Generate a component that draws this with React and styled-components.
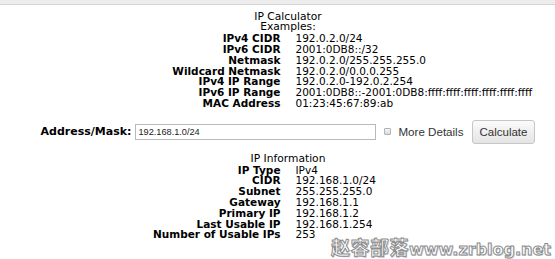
import React from "react";
import styled, { createGlobalStyle } from "styled-components";

const GlobalStyle = createGlobalStyle`
  html, body {
    margin: 0;
    padding: 0;
    background: #ffffff;
  }
  body {
    font-family: "DejaVu Sans", Verdana, sans-serif;
    color: #000;
    overflow: hidden;
  }
`;

const TopBar = styled.div`
  height: 4px;
  background: #ececec;
  border-bottom: 1px solid #d4d4d4;
`;

const Page = styled.div`
  position: relative;
  height: 254px;
  padding-left: 21px;
`;

const Section = styled.section`
  margin-top: ${(p) => p.$top}px;
`;

const Heading = styled.div`
  text-align: center;
  font-size: 10.7px;
  line-height: 10.8px;
`;

const InfoGrid = styled.div`
  display: grid;
  grid-template-columns: 1fr 1fr;
  column-gap: 15px;
  font-size: 10.5px;
  line-height: 10.8px;
`;

const Label = styled.div`
  text-align: right;
  font-weight: bold;
  white-space: nowrap;
`;

const Value = styled.div`
  white-space: nowrap;
`;

const Form = styled.form`
  display: flex;
  align-items: center;
  justify-content: center;
  margin-top: 11px;
  height: 24px;
`;

const FormLabel = styled.label`
  font-size: 11px;
  font-weight: bold;
  margin-right: 4px;
`;

const AddressInput = styled.input`
  box-sizing: border-box;
  width: 241px;
  height: 16px;
  margin: 0 8px 0 0;
  padding: 0 2px;
  border: 1px solid #b9b9b9;
  font-family: "Liberation Sans", Arial, sans-serif;
  font-size: 9.2px;
  color: #222;
  outline: none;
`;

const Check = styled.input`
  appearance: none;
  box-sizing: border-box;
  width: 7px;
  height: 7px;
  margin: 0 7px 0 0;
  border: 1px solid #b3b3b3;
  border-radius: 1px;
  background: linear-gradient(#f6f6f6, #dadada);
`;

const CheckText = styled.span`
  font-family: "Liberation Sans", Arial, sans-serif;
  font-size: 11.6px;
  color: #333;
  margin-right: 8px;
`;

const Button = styled.button`
  box-sizing: border-box;
  height: 24px;
  padding: 0 7px;
  border: 1px solid #c6c6c6;
  border-radius: 3px;
  background: linear-gradient(#fbfbfb, #e4e4e4);
  font-family: "Liberation Sans", Arial, sans-serif;
  font-size: 11.5px;
  color: #333;
`;

const Watermark = styled.div`
  position: absolute;
  right: 4px;
  bottom: 8px;
  display: flex;
  align-items: baseline;
  line-height: 1;
  color: #fff;
  -webkit-text-stroke: 1px #8c8c8c;
  text-shadow: 1px 1px 0 #cdd6e6;
  font-weight: bold;
  white-space: nowrap;
`;

const MarkCjk = styled.span`
  font-family: "Noto Sans CJK SC", sans-serif;
  font-size: 19px;
  letter-spacing: 0.5px;
`;

const MarkLatin = styled.span`
  font-family: "DejaVu Sans", sans-serif;
  font-size: 16px;
  letter-spacing: 0;
`;

const examples = [
  ["IPv4 CIDR", "192.0.2.0/24"],
  ["IPv6 CIDR", "2001:0DB8::/32"],
  ["Netmask", "192.0.2.0/255.255.255.0"],
  ["Wildcard Netmask", "192.0.2.0/0.0.0.255"],
  ["IPv4 IP Range", "192.0.2.0-192.0.2.254"],
  ["IPv6 IP Range", "2001:0DB8::-2001:0DB8:ffff:ffff:ffff:ffff:ffff:ffff"],
  ["MAC Address", "01:23:45:67:89:ab"],
];

const info = [
  ["IP Type", "IPv4"],
  ["CIDR", "192.168.1.0/24"],
  ["Subnet", "255.255.255.0"],
  ["Gateway", "192.168.1.1"],
  ["Primary IP", "192.168.1.2"],
  ["Last Usable IP", "192.168.1.254"],
  ["Number of Usable IPs", "253"],
];

const Rows = ({ items }) => (
  <InfoGrid>
    {items.map(([label, value]) => (
      <React.Fragment key={label}>
        <Label>{label}</Label>
        <Value>{value}</Value>
      </React.Fragment>
    ))}
  </InfoGrid>
);

export default function App() {
  return (
    <>
      <GlobalStyle />
      <TopBar />
      <Page>
        <Section $top={6.7}>
          <Heading>IP Calculator</Heading>
          <Heading>Examples:</Heading>
          <Rows items={examples} />
        </Section>

        <Form onSubmit={(e) => e.preventDefault()}>
          <FormLabel htmlFor="addr">Address/Mask:</FormLabel>
          <AddressInput id="addr" defaultValue="192.168.1.0/24" />
          <Check type="checkbox" />
          <CheckText>More Details</CheckText>
          <Button type="submit">Calculate</Button>
        </Form>

        <Section $top={10}>
          <Heading>IP Information</Heading>
          <Rows items={info} />
        </Section>

        <Watermark>
          <MarkCjk>赵容部落</MarkCjk>
          <MarkLatin>www.zrblog.net</MarkLatin>
        </Watermark>
      </Page>
    </>
  );
}
